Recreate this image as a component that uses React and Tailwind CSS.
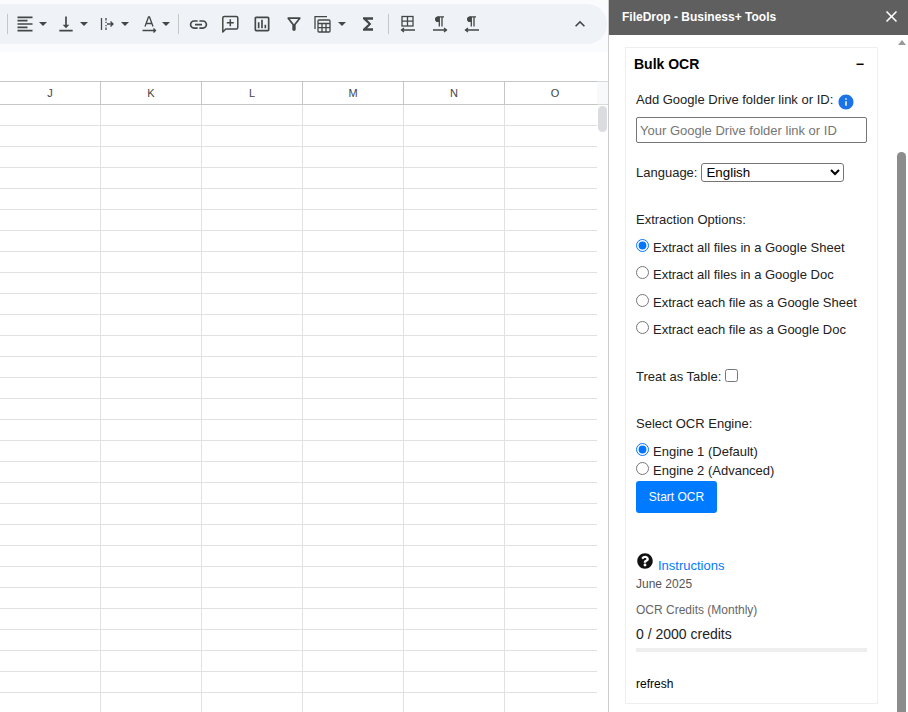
import React from "react";
import {
  MdFormatAlignLeft,
  MdVerticalAlignBottom,
  MdInsertLink,
  MdOutlineAssessment,
  MdOutlineFilterAlt,
  MdFunctions,
  MdExpandLess,
  MdInfo,
  MdClose,
} from "react-icons/md";
import { FaQuestionCircle } from "react-icons/fa";

const columns = ["J", "K", "L", "M", "N", "O"];
const rows = Array.from({ length: 29 });

function Tool({ className, children }) {
  return (
    <span className={"flex w-[24px] h-[24px] shrink-0 items-center justify-center text-[#444746] " + className}>
      {children}
    </span>
  );
}

function Caret({ className }) {
  return <span className={"w-0 h-0 shrink-0 border-x-[4px] border-x-transparent border-t-[4px] border-t-[#444746] " + className}></span>;
}

function Divider({ className }) {
  return <span className={"w-px h-[20px] shrink-0 bg-[#c7c7c7] " + className}></span>;
}

function WrapIcon() {
  return (
    <svg width="18" height="18" viewBox="0 0 18 18" fill="none" stroke="currentColor" strokeWidth="1.3">
      <path d="M3.500 3v12" />
      <path d="M8 3v2.500M8 12.500V15" />
      <path d="M8 6.800v1.200M8 10v1.200" />
      <path d="M9 9h6M12.500 6.500 15 9l-2.500 2.500" />
    </svg>
  );
}

function RotateIcon() {
  return (
    <svg width="18" height="18" viewBox="0 0 18 18" fill="none" stroke="currentColor" strokeWidth="1.3">
      <path d="M5 11.500 8.500 2h1L13 11.500M6.200 8.500h5.600" />
      <path d="M2.500 15.500h13M13.500 13.500l2 2-2 2" />
    </svg>
  );
}

function CommentIcon() {
  return (
    <svg width="20" height="20" viewBox="0 0 20 20" fill="none" stroke="currentColor" strokeWidth="1.5">
      <path d="M2.800 18V4a1.500 1.500 0 0 1 1.500-1.500h12a1.500 1.500 0 0 1 1.500 1.500v9.500a1.500 1.500 0 0 1-1.500 1.500H5.800z" strokeLinejoin="round" />
      <path d="M10.300 5.200v7M6.800 8.700h7" />
    </svg>
  );
}

function TableIcon() {
  return (
    <svg width="20" height="20" viewBox="0 0 20 20" fill="none" stroke="currentColor" strokeWidth="1.3">
      <path d="M2 15V2.700h12" />
      <rect x="5" y="6" width="12" height="12" rx="1" />
      <path d="M5 9.500h12M5 13.700h12M9 9.500V18M13 9.500V18" />
    </svg>
  );
}

function BordersIcon() {
  return (
    <svg width="18" height="18" viewBox="0 0 18 18" fill="none" stroke="currentColor" strokeWidth="1.3">
      <rect x="3" y="1.500" width="11" height="9.500" />
      <path d="M3 6.200h11M8.500 1.500V11" />
      <path d="M2 15h14M5 13l-2.500 2L5 17" />
    </svg>
  );
}

function PilcrowIcon({ rtl }) {
  return (
    <svg width="18" height="18" viewBox="0 0 18 18" fill="none" stroke="currentColor" strokeWidth="1.3">
      <path d="M8 1.500H6.800a2.800 2.800 0 0 0 0 5.600H8z" fill="currentColor" stroke="none" />
      <path d="M13 1.800H6.500M8.300 1.800V11.500M11 1.800V11.500" />
      {rtl ? <path d="M2 15h14M5 13l-2.500 2L5 17" /> : <path d="M2 15h14M13 13l2.500 2-2.500 2" />}
    </svg>
  );
}

function Toolbar() {
  return (
    <div className="h-[52px] bg-[#f9fbfd] pt-[4px]">
      <div className="flex h-[40px] items-center bg-[#eff3f8] rounded-r-[20px] mr-px">
        <Divider className="ml-[7px]" />
        <Tool className="ml-[5px]"><MdFormatAlignLeft size={20} /></Tool>
        <Caret className="ml-[2px]" />
        <Tool className="ml-[7px]"><MdVerticalAlignBottom size={20} /></Tool>
        <Caret className="ml-[2px]" />
        <Tool className="ml-[7px]"><WrapIcon /></Tool>
        <Caret className="ml-[2px]" />
        <Tool className="ml-[8px]"><RotateIcon /></Tool>
        <Caret className="ml-px" />
        <Divider className="ml-[8px]" />
        <Tool className="ml-[7px]"><MdInsertLink size={21} /></Tool>
        <Tool className="ml-[8px]"><CommentIcon /></Tool>
        <Tool className="ml-[8px]"><MdOutlineAssessment size={20} /></Tool>
        <Tool className="ml-[8px]"><MdOutlineFilterAlt size={20} /></Tool>
        <Tool className="ml-[5px]"><TableIcon /></Tool>
        <Caret className="ml-[3px]" />
        <Tool className="ml-[10px]"><MdFunctions size={20} /></Tool>
        <Divider className="ml-[8px]" />
        <Tool className="ml-[7px]"><BordersIcon /></Tool>
        <Tool className="ml-[8px]"><PilcrowIcon /></Tool>
        <Tool className="ml-[8px]"><PilcrowIcon rtl /></Tool>
        <Tool className="ml-auto mr-[15px]"><MdExpandLess size={20} /></Tool>
      </div>
    </div>
  );
}

function SheetGrid() {
  return (
    <div className="flex flex-1 min-h-0 mt-[29px] overflow-hidden">
      <div className="w-[597px] shrink-0 overflow-hidden">
        <div className="flex w-[606px] h-[24px] border-y border-[#c4c7c5]">
          {columns.map((c) => (
            <div key={c} className="flex w-[101px] items-center justify-center border-r border-[#c4c7c5] text-[11px] text-[#444]">
              {c}
            </div>
          ))}
        </div>
        {rows.map((_, i) => (
          <div key={i} className="flex w-[606px] h-[21px] border-b border-[#e1e1e1]">
            {columns.map((c) => (
              <div key={c} className="w-[101px] border-r border-[#e1e1e1]"></div>
            ))}
          </div>
        ))}
      </div>
      <div className="flex-1">
        <div className="h-[24px] bg-[#f8f9fa] border-y border-[#d9d9d9]"></div>
        <div className="ml-px mt-px w-[9px] h-[26px] rounded-full bg-[#dadce0]"></div>
      </div>
    </div>
  );
}

function Radio({ label, name, checked, className }) {
  return (
    <label className={"flex items-center whitespace-nowrap ml-[2px] " + className}>
      <input type="radio" name={name} defaultChecked={checked} className="w-[13px] h-[13px] -mt-[6px] mr-[4px]" />
      {label}
    </label>
  );
}

function Sidebar() {
  return (
    <div className="flex flex-col flex-1 h-full border-l border-[#ccc] text-[13px] text-[#222]" style={{ fontFamily: '"Liberation Sans", Arial, sans-serif' }}>
      <div className="flex h-[35px] shrink-0 items-center justify-between bg-[#5f5f5f] pl-[13px] pr-[7px] pb-[2px] text-white">
        <span className="text-[12px] font-bold">FileDrop - Business+ Tools</span>
        <MdClose size={19} />
      </div>
      <div className="flex flex-1 min-h-0 pl-[16px]">
        <div className="w-[253px] h-[657px] mt-[12px] border border-[#eee] pl-[8px] pr-[9px] shrink-0">
          <div className="flex h-[14px] mt-[9px] items-center justify-between text-[14px] text-black font-bold">
            <span>Bulk OCR</span>
            <span className="mr-[4px]">−</span>
          </div>
          <div className="flex items-center h-[16px] mt-[21px] ml-[2px] whitespace-nowrap">
            Add Google Drive folder link or ID:
            <MdInfo size={18} className="ml-[4px] mt-[3px] text-[#1a73e8]" />
          </div>
          <input
            placeholder="Your Google Drive folder link or ID"
            className="block w-[231px] h-[26px] mt-[9px] ml-[2px] px-[3px] border border-[#767676] rounded-[2px] placeholder:text-[#757575]"
          />
          <div className="flex items-center h-[19px] mt-[20px] ml-[2px]">
            Language:
            <select className="w-[143px] h-[19px] ml-[4px] border border-[#767676] rounded-[3px] text-[13.33px] text-black">
              <option>English</option>
            </select>
          </div>
          <div className="h-[16px] mt-[28px] ml-[2px]">Extraction Options:</div>
          <Radio name="mode" checked label="Extract all files in a Google Sheet" className="h-[16px] mt-[14px]" />
          <Radio name="mode" label="Extract all files in a Google Doc" className="h-[16px] mt-[11px]" />
          <Radio name="mode" label="Extract each file as a Google Sheet" className="h-[16px] mt-[12px]" />
          <Radio name="mode" label="Extract each file as a Google Doc" className="h-[16px] mt-[11px]" />
          <div className="flex items-center h-[16px] mt-[31px] ml-[2px]">
            Treat as Table:
            <input type="checkbox" className="w-[13px] h-[13px] ml-[4px] -mt-[4px]" />
          </div>
          <div className="h-[16px] mt-[29px] ml-[2px]">Select OCR Engine:</div>
          <Radio name="engine" checked label="Engine 1 (Default)" className="h-[16px] mt-[14px]" />
          <Radio name="engine" label="Engine 2 (Advanced)" className="h-[16px] mt-[3px]" />
          <button className="block w-[81px] h-[32px] mt-[2px] ml-[2px] rounded-[3px] bg-[#007bff] text-[12px] text-white">Start OCR</button>
          <div className="flex items-center h-[18px] mt-[44px] ml-[3px]">
            <FaQuestionCircle size={16} className="text-[#111] -mt-[10px]" />
            <span className="ml-[5px] text-[#007bff]">Instructions</span>
          </div>
          <div className="h-[14px] ml-[2px] text-[12px] text-[#555]">June 2025</div>
          <div className="h-[14px] mt-[12px] ml-[2px] text-[12px] text-[#666]">OCR Credits (Monthly)</div>
          <div className="h-[16px] mt-[9px] ml-[2px] text-[14px]">0 / 2000 credits</div>
          <div className="w-[231px] h-[4px] mt-[8px] ml-[2px] bg-[#eee]"></div>
          <div className="h-[14px] mt-[23px] ml-[2px] text-[12px] text-black">refresh</div>
        </div>
        <div className="flex flex-1 flex-col items-end pr-[2px]">
          <div className="w-[9px] mt-[5px] flex justify-center">
            <span className="w-0 h-0 border-x-[4px] border-x-transparent border-b-[5px] border-b-[#999]"></span>
          </div>
          <div className="w-[9px] flex-1 mt-[107px] rounded-t-[5px] bg-[#8c8c8c]"></div>
        </div>
      </div>
    </div>
  );
}

export default function App() {
  return (
    <div className="flex w-[908px] h-[712px] overflow-hidden bg-white" style={{ fontFamily: '"Liberation Sans", Arial, sans-serif' }}>
      <div className="flex flex-col w-[608px] h-full shrink-0">
        <Toolbar />
        <SheetGrid />
      </div>
      <Sidebar />
    </div>
  );
}
